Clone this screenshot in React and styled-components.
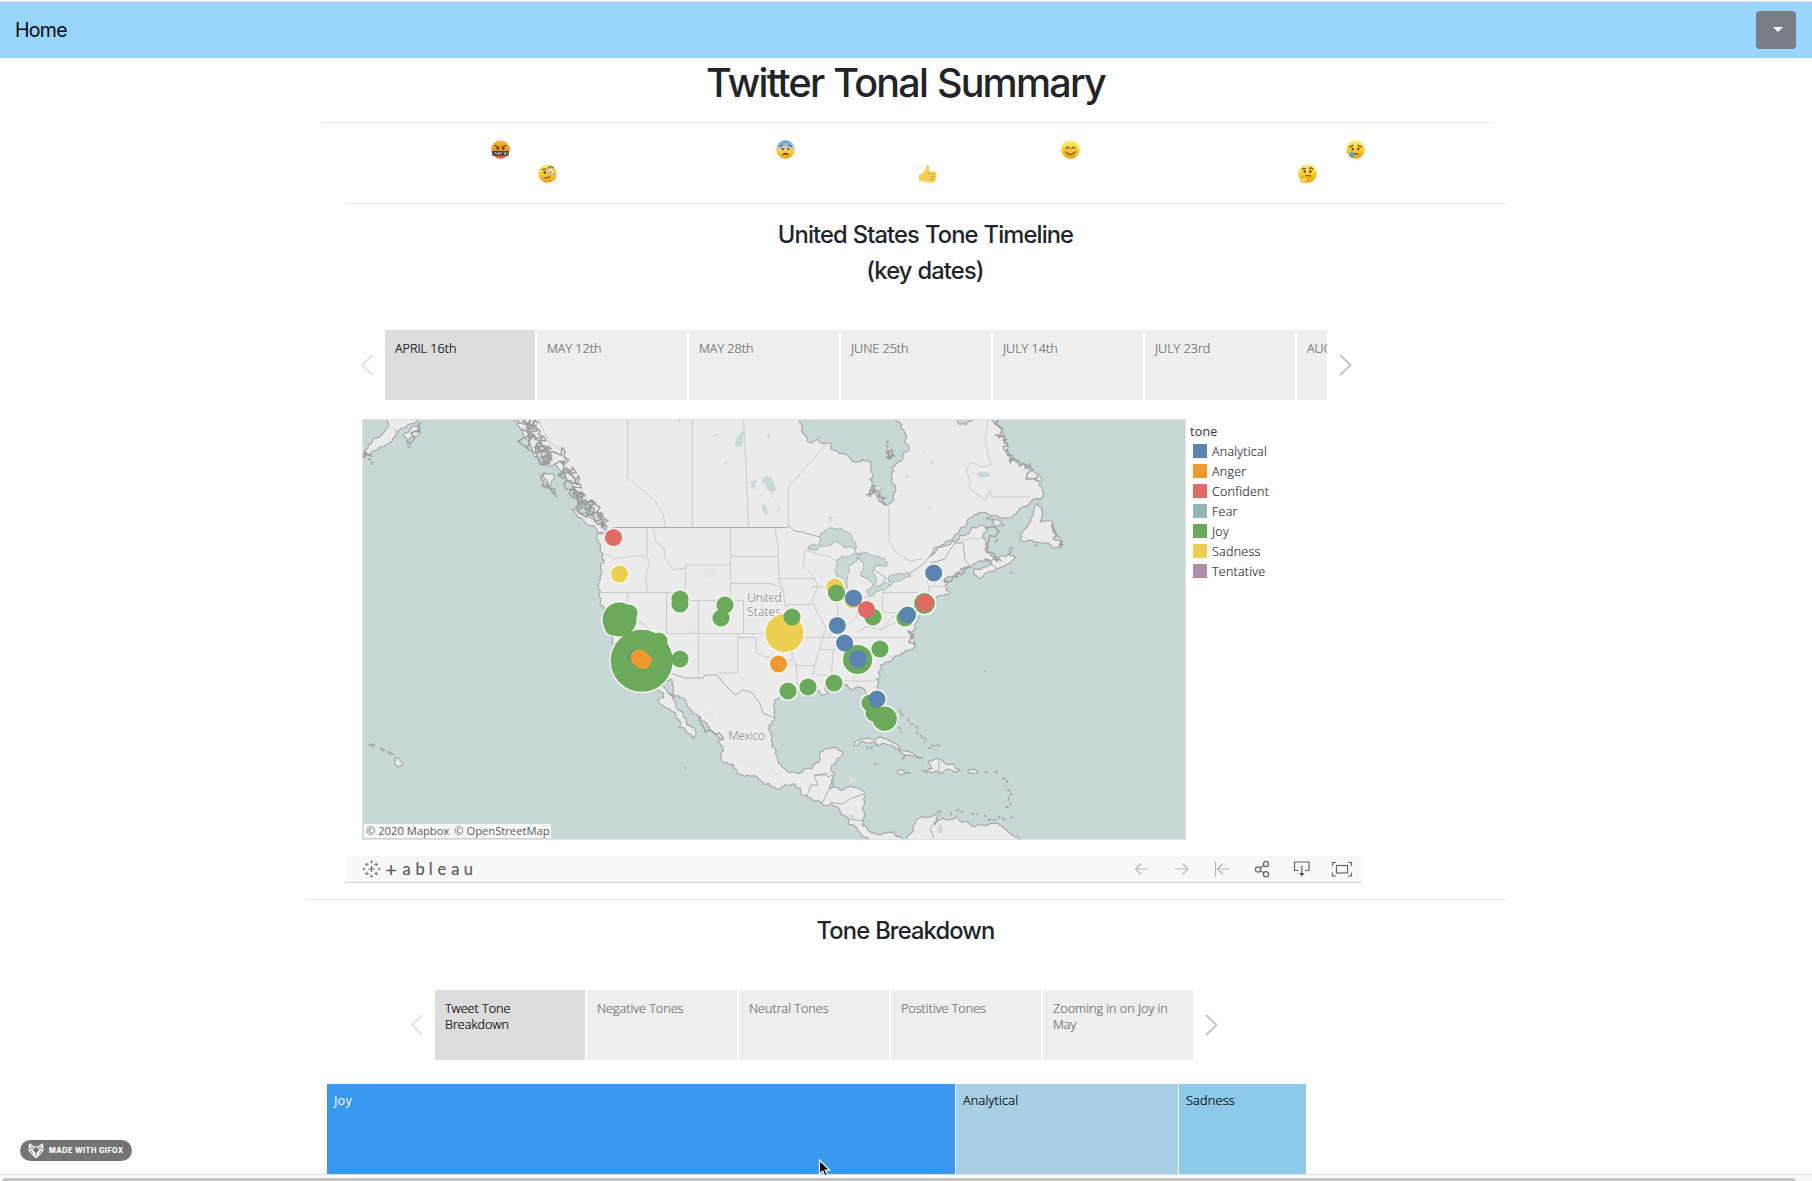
import React from "react";
import styled, { createGlobalStyle } from "styled-components";

const GlobalStyle = createGlobalStyle`
  * { box-sizing: border-box; }
  body { margin: 0; background: #fefefe; overflow: hidden; }
`;

const uiFont = `Inter, "Liberation Sans", sans-serif`;
const vizFont = `"Open Sans", "Noto Sans", sans-serif`;

const Page = styled.div`
  position: relative;
  display: flex;
  flex-direction: column;
  width: 1812px;
  height: 1181px;
  overflow: hidden;
  background: #fefefe;
  color: #212529;
  font-family: ${uiFont};
`;

const TopEdge = styled.div`
  height: 2px;
  flex: none;
  border-bottom: 1px solid #e0e0e0;
`;

const Nav = styled.nav`
  display: flex;
  flex: none;
  align-items: center;
  justify-content: space-between;
  height: 56px;
  padding: 0 16px 0 15px;
  background: #99d4fd;
`;

const Brand = styled.a`
  color: #060a0d;
  font-size: 19.5px;
  line-height: 30px;
  letter-spacing: -0.7px;
`;

const MenuButton = styled.button`
  display: flex;
  align-items: center;
  justify-content: center;
  width: 40px;
  height: 38px;
  padding: 0 0 2px 4px;
  border: 0;
  border-radius: 4px;
  background: #777e85;
`;

const Caret = styled.span`
  border: 5px solid transparent;
  border-top-color: #fff;
  border-bottom: 0;
`;

const Title = styled.h1`
  height: 48px;
  margin: 0;
  padding: 1px 1px 0 0;
  font-size: 39.5px;
  font-weight: 500;
  line-height: 48px;
  letter-spacing: -1.77px;
  word-spacing: 1px;
  text-align: center;
`;

const Rule = styled.hr`
  flex: none;
  width: ${(p) => p.$width}px;
  height: 1px;
  margin: ${(p) => p.$gap} 0 0 ${(p) => p.$left}px;
  border: 0;
  background: #e5e5e5;
`;

const Emotions = styled.div`
  display: flex;
  flex-direction: column;
  width: 1140px;
  height: 48px;
  margin: 15px 0 0 357.6px;
`;

const EmojiRow = styled.div`
  display: grid;
  grid-template-columns: repeat(${(p) => p.$cols}, 1fr);
  justify-items: center;
  align-items: center;
  height: 24px;
  padding-bottom: 1px;
`;

const Heading = styled.h4`
  width: ${(p) => p.$width}px;
  margin: ${(p) => p.$gap}px 0 0 ${(p) => p.$left}px;
  font-size: 23.7px;
  font-weight: 500;
  line-height: 29px;
  letter-spacing: -0.86px;
  word-spacing: 0.5px;
  text-align: center;
`;

const Story = styled.div`
  display: flex;
  align-items: center;
  height: 70px;
  margin: 45px 0 0 ${(p) => p.$left}px;
`;

const StoryPoints = styled.div`
  display: flex;
  gap: 2px;
  width: ${(p) => p.$width}px;
  height: 70px;
  margin: 0 11.5px 0 12px;
  overflow: hidden;
`;

const StoryPoint = styled.div`
  flex: none;
  width: 150px;
  height: 70px;
  padding: 11px 10px;
  background: ${(p) => (p.$active ? "#dddddd" : "#eeeeee")};
  color: ${(p) => (p.$active ? "#000" : "#6c6c6c")};
  font-family: ${vizFont};
  font-weight: 300;
  font-size: 12.6px;
  line-height: 16px;
  white-space: pre-line;
  -webkit-text-stroke: 0.2px currentColor;
`;

const MapRow = styled.div`
  display: flex;
  margin: 19px 0 0 362px;
`;

const MapBox = styled.div`
  position: relative;
  width: 824px;
  height: 421px;
`;

const Attribution = styled.div`
  position: absolute;
  left: 2px;
  bottom: 2px;
  display: flex;
  gap: 5px;
  width: 187px;
  height: 14px;
  padding-left: 2px;
  background: rgba(255, 255, 255, 0.85);
  color: #5c5c5c;
  font-family: ${vizFont};
  font-weight: 500;
  font-size: 11.2px;
  line-height: 14px;
  white-space: nowrap;
`;

const Legend = styled.div`
  display: flex;
  flex-direction: column;
  padding: 3px 0 0 4px;
  font-family: ${vizFont};
  font-size: 12.5px;
`;

const LegendTitle = styled.div`
  height: 19px;
  line-height: 20px;
  color: #333;
  letter-spacing: 0.2px;
`;

const LegendItem = styled.div`
  display: flex;
  align-items: center;
  gap: 5px;
  height: 20px;
  padding-left: 3px;
  color: #222;
  font-weight: 300;
  letter-spacing: 0.25px;
  -webkit-text-stroke: 0.15px currentColor;
`;

const Swatch = styled.span`
  width: 14px;
  height: 14px;
  background: ${(p) => p.$color};
`;

const Toolbar = styled.div`
  display: flex;
  align-items: center;
  justify-content: space-between;
  width: 1016px;
  height: 27px;
  margin: 16px 0 0 346px;
  padding: 0 9px 0 16px;
  border-bottom: 1px solid #d0d0d0;
  background: #f8f8f8;
`;

const Logo = styled.div`
  display: flex;
  align-items: center;
  gap: 1px;
`;

const Wordmark = styled.div`
  display: flex;
  color: #5c5c5c;
  font-family: Lato, sans-serif;
  line-height: 22px;
  -webkit-text-stroke: 0.2px currentColor;
`;

const Letter = styled.span`
  width: ${(p) => p.$w}px;
  font-size: ${(p) => (p.$big ? 20 : 16.5)}px;
  text-align: center;
`;

const Tools = styled.div`
  display: flex;
  gap: 18px;
`;

const Treemap = styled.div`
  display: flex;
  gap: 1px;
  height: 90px;
  margin: 24px 0 0 327px;
`;

const Tile = styled.div`
  width: ${(p) => p.$width}px;
  padding: 8px 7px;
  background: ${(p) => p.$color};
  color: ${(p) => p.$ink};
  font-family: ${vizFont};
  font-weight: ${(p) => p.$weight};
  font-size: 12.7px;
  line-height: 17px;
  letter-spacing: 0.2px;
  -webkit-text-stroke: ${(p) => (p.$weight === 300 ? "0.2px" : "0")} currentColor;
`;

const ScrollTrack = styled.div`
  height: 7px;
  padding: 3px 16px 0 2px;
  border-top: 1px solid #e0e0e0;
  background: #f9f9f9;
`;

const ScrollThumb = styled.div`
  height: 8px;
  border-radius: 4px;
  background: #c4c4c4;
`;

const Badge = styled.div`
  position: absolute;
  left: 20px;
  top: 1140px;
  display: flex;
  align-items: center;
  gap: 5px;
  width: 112px;
  height: 21px;
  padding-left: 8px;
  border-radius: 11px;
  background: #747474;
  color: #fff;
  font-size: 7.2px;
  font-weight: 800;
  letter-spacing: 0.5px;
  white-space: nowrap;
`;

const Cursor = styled.svg`
  position: absolute;
  left: 818px;
  top: 1159px;
`;

/* ---------- emoji ---------- */

const Eyes = ({ y = 8 }) => (
  <g fill="#6b3d0c">
    <ellipse cx="6.3" cy={y} rx="1.1" ry="1.4" />
    <ellipse cx="11.7" cy={y} rx="1.1" ry="1.4" />
  </g>
);

const Face = ({ kind, children }) => (
  <svg width="19" height="19" viewBox="0 0 18 18">
    <defs>
      <linearGradient id={"face-" + kind} x1="0" y1="0" x2="0" y2="1">
        {kind === "fear" ? (
          <>
            <stop offset="0" stopColor="#5c9fd8" />
            <stop offset="0.35" stopColor="#a6cbe0" />
            <stop offset="0.55" stopColor="#f6d040" />
            <stop offset="1" stopColor="#efa514" />
          </>
        ) : kind === "rage" ? (
          <>
            <stop offset="0" stopColor="#f3bd3c" />
            <stop offset="0.5" stopColor="#ee962e" />
            <stop offset="1" stopColor="#f04c24" />
          </>
        ) : (
          <>
            <stop offset="0" stopColor="#fdec7c" />
            <stop offset="0.5" stopColor="#fbd235" />
            <stop offset="1" stopColor="#e99a10" />
          </>
        )}
      </linearGradient>
    </defs>
    <circle cx="9" cy="9" r="8.8" fill={`url(#face-${kind})`} />
    {children}
  </svg>
);

const ink = { fill: "none", stroke: "#6b3d0c", strokeWidth: 1, strokeLinecap: "round" };

const emojis = {
  rage: (
    <Face kind="rage">
      <Eyes y={8} />
      <path d="M3.8 5.2 7.6 7M14.2 5.2 10.4 7" {...ink} />
      <rect x="1.2" y="10.4" width="15.6" height="4.6" rx="0.6" fill="#3a3a3c" />
      <path d="M3 13.8 4.4 11.4 5.6 13.8M7 11.5v2.4M6.4 12.6h2.8M8.6 11.5v2.4M10.4 11.5v1.4M10.4 13.8v.2M12 11.6c2.4-.4 2 1 .8 1.1 1.8.1 1.8 1.3-.6 1.2M15.3 11.6v2.2" stroke="#ddd" strokeWidth="0.7" fill="none" />
    </Face>
  ),
  fear: (
    <Face kind="fear">
      <ellipse cx="6.2" cy="8.3" rx="1.6" ry="1.8" fill="#fff" />
      <ellipse cx="11.8" cy="8.3" rx="1.6" ry="1.8" fill="#fff" />
      <Eyes y={8.5} />
      <path d="M3.4 6.2 5.8 4.8M14.6 6.2 12.2 4.8" {...ink} />
      <path d="M5.8 14.6c.2-3.4 6.2-3.4 6.4 0-1.8-.9-4.6-.9-6.4 0z" fill="#7a3c10" />
    </Face>
  ),
  smile: (
    <Face kind="smile">
      <path d="M4.7 8.2c.5-2 2.5-2 3 0M10.3 8.2c.5-2 2.5-2 3 0M4.8 11.4c1.8 3 6.6 3 8.4 0" {...ink} />
      <circle cx="3.8" cy="10.6" r="1.4" fill="#f39a2d" opacity=".6" />
      <circle cx="14.2" cy="10.6" r="1.4" fill="#f39a2d" opacity=".6" />
    </Face>
  ),
  sad: (
    <Face kind="sad">
      <Eyes y={8.6} />
      <path d="M3.4 6.7 6.6 5M14.6 6.7 11.4 5M7.4 13.8c1-1.3 3-1.3 4 0" {...ink} />
      <path d="M5.4 10.4c2 2.4 2.4 3.2 2.2 4.6-.4 2-4 2-4.4 0-.2-1.4.6-2.6 2.2-4.6z" fill="#4ba3ea" />
    </Face>
  ),
  monocle: (
    <Face kind="monocle">
      <Eyes y={8} />
      <path d="M3.8 5.2 7.6 4.8M6.4 13.2c1.6-.2 3.4-.6 4.8-1.2M9.8 3.2c1.4-.8 3-.8 4.4.1" {...ink} />
      <circle cx="12" cy="7.2" r="3.5" fill="#fff" fillOpacity=".45" stroke="#a9a48d" strokeWidth=".9" />
      <path d="M15.6 8c1 2.6.8 6 1.2 8.5" stroke="#b9b39a" fill="none" strokeWidth=".7" />
    </Face>
  ),
  think: (
    <Face kind="think">
      <Eyes y={7.2} />
      <path d="M4 4.8c1-1 2.4-.8 3.2-.3M10.6 4c1.2-.6 2.6-.2 3.4.8M7.4 11.2c1.6-.4 3-.2 4.6.2" {...ink} />
      <path d="M3.2 12.2c.8-.6 1.4.2 1.6.8l4.6-1.8c1-.2 1.2.8.4 1.2l-2 1.2c1.8.4 1.4 1.6.8 2.4-1 1.6-2.4 2-4 1.8-2-.4-2.4-3-1.4-5.6z" fill="#fbd54a" stroke="#d98a12" strokeWidth=".6" />
    </Face>
  ),
  thumb: (
    <svg width="19" height="20" viewBox="0 0 19 20">
      <path d="M1 10.5c2.6-.4 4.6-2 6-4.6C8 4 7.8 1 9.4 1c2.2 0 2 3.6 1.4 6.4h5.8c1.8 0 2 2 .8 2.6 1.4.5 1.3 2.3.1 2.8 1 .6.8 2.2-.4 2.6.6.8.2 2.6-1.4 2.9-3 .6-6.2.6-8.9-.5-1.9-.7-3.9-.9-5.8-.8z" fill="#f8cf52" />
      <path d="M11.4 10.1h6M11.4 12.9h6M11.6 15.5h5.400M10.800 7.400c-.2 1-.8 1.800-1.200 2.400" stroke="#dc9a26" strokeWidth=".9" fill="none" />
    </svg>
  ),
};

/* ---------- map ---------- */

function makeRandom(seed) {
  let s = seed * 7919;
  return () => {
    s = (s * 16807) % 2147483647;
    return s / 2147483647 - 0.5;
  };
}

// Splits every long segment and nudges the midpoints, so that a coast reads as ragged.
function coast(text, amp = 0.35, close = true, seed = 7) {
  const rnd = makeRandom(seed);
  let pts = text.trim().split(/\s+/).map((p) => p.split(",").map(Number));
  if (close) pts.push(pts[0]);
  for (let k = 0; k < 3; k++) {
    const out = [pts[0]];
    for (let i = 1; i < pts.length; i++) {
      const [ax, ay] = pts[i - 1];
      const [bx, by] = pts[i];
      const len = Math.hypot(bx - ax, by - ay);
      if (len > 2) {
        const off = rnd() * Math.min(len, 14) * amp;
        out.push([(ax + bx) / 2 - ((by - ay) / len) * off, (ay + by) / 2 + ((bx - ax) / len) * off]);
      }
      out.push(pts[i]);
    }
    pts = out;
  }
  return "M" + pts.map((p) => p[0].toFixed(1) + " " + p[1].toFixed(1)).join("L") + (close ? "Z" : "");
}

const mainland = `513,400 514,420 520,428 525,438 532,448 540,460 548,466 555,463 560,470 566,477 572,482 575,490
580,500 590,510 600,516 606,525 609,531 598,534 601,545 603,555 601,570 599,583 601,592 600,600 604,608 606,625 610,635
618,645 640,685 656,690 664,698 659,699 660,704 666,708 672,712 678,720 679,727 687,733 693,739 696,736 690,725 685,718
680,711 675,702 668,692 662,686 670,679 673,690 680,698 688,707 697,715 698,720 708,727 720,738 723,747 721,754 727,763
737,771 747,775 762,782 773,787 780,789 792,784 800,788 810,798 822,803 835,806 840,812 848,818 849,825 858,831 867,838
870,843 905,843 899,836 890,832 880,835 875,833 867,828 862,820 863,807 865,792 860,789 847,787 833,787 830,789 833,777
835,763 837,760 842,751 838,749 820,752 817,763 812,769 793,772 783,768 777,757 772,747 771,735 772,723 775,717 774,707
780,697 797,690 810,692 818,690 822,695 828,693 825,687 830,685 845,685 853,690 862,688 866,693 867,705 880,723 890,727
892,715 883,702 877,688 876,679 880,670 893,658 900,655 908,650 915,645 913,638 908,632 915,627 918,617 925,612 930,603
937,597 950,593 945,585 947,577 959,572 971,567 976,563 988,559 1002,558 991,556 986,548 982,538 984,533 988,530 985,526
972,527 960,535 948,545 930,556 954,537 967,523 974,515 995,515 1016,514 1028,505 1040,500 1042,490 1041,480 1033,470
1016,462 1009,453 1004,443 1003,433 998,425 991,419 988,400 976,400 974,420 966,425 957,420 955,400 893,400 895,419
905,432 909,447 902,460 892,467 892,483 893,497 891,503 886,505 878,497 872,485 871,463 854,462 840,454 827,443
817,439 807,441 802,427 796,418 792,400`;

const islands = [
  "358,458 366,450 372,443 379,437 385,431 388,415 420,415 410,424 402,428 393,438 380,447 370,454",
  "403,435 412,427 421,423 420,433 408,442",
  "572,509 587,515 600,525 607,534 598,532 585,522",
  "543,473 552,473 551,485 557,497 548,488",
  "974,568 978,578 988,572 1002,567 1016,557 1009,555 1012,547 1005,557 991,563",
  "1038,503 1042,508 1040,522 1053,523 1055,532 1062,540 1060,548 1052,548 1047,543 1040,543 1029,540 1020,541 1026,528 1031,518",
  "986,518 995,520 1004,526 996,526",
  "854,746 860,739 880,737 897,744 913,753 923,758 902,759 905,755 890,745 870,743",
  "928,761 943,761 960,769 957,772 943,772 941,774 936,771 922,771 932,769",
  "897,771 903,770 910,773 904,774",
  "968,770 977,770 978,773 969,773",
  "396,757 403,763 398,767 395,762",
  "388,752 394,754 390,755",
  "381,748 385,750 382,751",
  "371,744 375,745 372,747",
  "903,843 907,837 913,827 916,820 930,817 942,811 937,817 935,825 939,820 948,820 957,817 962,822 980,825 993,823 1003,827 1010,833 1022,843",
];

const lakes = [
  "808,549 820,538 833,528 841,528 848,533 855,544 855,550 845,548 838,543 828,546 817,550",
  "836,560 842,556 852,555 862,553 857,560 849,566 846,575 847,588 842,594 836,590 837,575",
  "858,555 874,556 885,558 886,567 878,566 874,566 876,577 873,585 869,580 861,576 864,567",
  "867,590 880,586 892,584 885,590 869,596",
  "888,579 899,574 909,573 910,577 899,581 889,582",
  "763,477 770,477 776,490 773,500 766,490",
  "751,482 757,480 756,490 751,488",
  "761,501 768,510 767,515 762,508",
  "777,503 780,508 777,513",
  "828,517 834,517 831,523",
  "742,432 746,430 741,446 737,447",
  "712,437 717,433 715,437",
  "678,420 681,419 680,425",
  "975,475 980,471 985,472 991,475 984,477",
  "903,478 908,474 907,479",
  "927,507 931,504 929,509",
  "937,829 941,823 943,830 939,833",
  "848,813 852,815 855,819 850,818",
  "930,462 935,463 931,465",
  "921,450 925,452 924,454",
  "767,436 769,434 769,439",
  "724,463 729,462 725,465",
  "389,428 396,430 394,431",
];

const nationBorders = [
  "M612 527.5H788",
  "M788 525l6 6 8 1 10 3 8 2 12-8",
  "M840 540l14 8 4 10 28 20-8 12M888 580l22-6",
  "M910 573l12-8 8-9",
  "M670 673l15 5h18l2-3h12l5 6 5 6 9 8 6-5 9 2 9 11 3 10 12 5",
  "M930 563l8-2 7-2 4-8 6-8 8 0 2 17 6 7",
  "M814 775h13v-1M827 777l6-2v12M808 793l3-8 7 0-4-9 12-3",
  "M822 803l8-15M830 802l12 2 10-6 12-4M849 819l15 2M937 820l-7 8 4 10",
  "M939 761v11",
];

const stateBorders = [
  "M605 554l10 5 17-3h15M647 528v28M647 557l3 4-4 14 1 17M600 592.5h85",
  "M653 528l3 14 8 6 1 10 8 12 12-2M685.5 592v-27h46M730.5 528v72M731 556.5h48M731 583.5h39l9 3 4 5",
  "M685 592v8.5h59M666.5 592v62M698.5 600v78M743.5 600v34M667 633.5h125M737.5 634v39h-20M737 637.5h19v15l9 4 12 2 15 2",
  "M627.5 592v18l38 34",
  "M775 528l3 17 1 35 4 10 2 15 5 8v24M779 578.5h35M805 550l-2 15 10 10 5 11-6 14 4 10 10 18-4 12-6 20-3 15",
  "M787 604.5h25M792 637.5h32M796 665.5h18M792 637v18l4 10 2 25M805 550l25 7 8 5M812 587h24",
  "M820 649.5h60M824 637.5h89M833 649.5l-2 34M848 650l6 22v9M843 681h32M816 675h14",
  "M837.5 595v25l-8 16M857 597v20l-14 12M857 597h12M882.5 592v20M882.5 612.5h30M882 592.5h36l6 8",
  "M857 632l12-6 12 4 16-18M880 649l14 10M880 630l24-12",
  "M929 586.5h17M928 580.5h18M939 563l-4 22M925 573l5 20",
  "M627.5 419v59l12 10 15 12 9 15 2 13M692.5 419v109M743.5 419l2 36 3 73M788.5 527v-40l39-44",
  "M889 505v35l6 12 15 9 12-2",
  "M988 419l-3 22 6 24-10 2-9-5-6 8 4 10-1 8 8 6 8 6 5-10 2 7h38M958 543l12-5 10 1",
  "M538 419l6 12 6 12 10 6 5 10",
];

const fjords = [
  "518,420 524,424 530,432 534,440 540,446 546,454 550,462",
  "524,422 528,432 536,438 541,450 546,458 544,466",
  "530,420 536,432 540,442 548,448 554,452 556,464",
  "522,428 532,436 530,444 540,450 538,458 548,464",
  "560,462 564,470 562,478 570,482 574,492 579,498 582,506",
  "566,470 574,478 580,484 576,494 586,500 584,508 594,512",
  "588,508 594,508 598,514 604,518 606,526",
  "574,486 578,492 577,498 583,504 590,511 598,518 606,525",
];

const raggedShores = [
  "994,419 999,427 1004,437 1004,449 1010,455 1018,463 1033,470 1040,482",
  "886,452 892,450 894,456 889,460 887,452",
  "908,630 913,634 910,640 915,645",
  "1053,524 1056,533 1061,541 1059,547",
  "945,578 958,573 970,568",
  "700,716 712,731 720,740",
  "866,495 872,486 878,497 886,505",
  "545,474 547,484 555,494",
  "408,441 413,436 420,432 418,426",
  "372,457 368,455 362,456",
  "985,528 988,548 994,558 1002,560",
];

const specks = [
  "899,710 903,714 902,717", "896,722 900,728 901,733", "908,718 912,724 917,730", "917,731 920,735 925,738 924,743",
  "928,748 932,745 940,747", "866,746 871,748 878,747", "994,772 998,774", "1003,777 1006,787", "1007,790 1009,800 1006,810",
  "985,773 988,772", "950,812 951,816", "956,811 963,813", "971,814 978,814", "984,815 986,817", "988,821 996,820 1006,822",
  "364,455 372,461 373,466", "411,447 405,447", "368,745 371,744", "874,763 880,764", "1010,818 1012,816", "685,767 687,768",
  "1034,545 1038,544", "1010,573 1012,574", "984,559 990,563 996,566", "996,543 998,540", "889,452 887,446 890,440",
  "670,693 674,698", "984,671 986,671",
];

const tones = {
  Analytical: "#5c84b1", Anger: "#ee9a2e", Confident: "#e26a64", Fear: "#92b5b8", Joy: "#6aaa5a", Sadness: "#ecce50", Tentative: "#b18ea9",
};

const marks = [
  [613.5, 537.5, 8.6, "Confident"], [619.5, 574, 8.6, "Sadness"],
  [680, 599, 8.6, "Joy"], [680, 604, 8.6, "Joy"], [725, 605, 8.6, "Joy"], [721, 618, 8.6, "Joy"],
  [619.5, 619.5, 17, "Joy"], [629, 613, 8.6, "Joy"], [613, 627, 8.6, "Joy"],
  [641.7, 660.8, 31, "Joy"], [659, 641, 8.6, "Joy"], [680, 659, 8.6, "Joy"],
  [637.8, 657, 8.6, "Analytical"], [639, 657.5, 8.6, "Anger"], [643, 660.5, 8.6, "Anger"],
  [784.5, 633, 19, "Sadness"], [792, 617, 8.6, "Joy"], [778.5, 664, 8.6, "Anger"],
  [788, 691, 8.6, "Joy"], [808, 687, 8.6, "Joy"], [834, 683, 8.6, "Joy"],
  [835, 587, 8.6, "Sadness"], [836.5, 593, 8.6, "Joy"], [853, 600, 8.6, "Sadness"], [853.5, 598, 8.6, "Analytical"],
  [873, 617, 8.6, "Joy"], [866.5, 609.5, 8.6, "Confident"],
  [905, 618, 8.6, "Joy"], [907.6, 615, 8.6, "Analytical"],
  [924.5, 603.5, 10.4, "Joy"], [924.8, 603, 8.8, "Confident"], [933.7, 573, 8.6, "Analytical"],
  [837.3, 625.5, 8.6, "Analytical"], [857.6, 659.5, 14.6, "Joy"], [844.6, 643, 8.6, "Analytical"], [858, 659, 9, "Analytical"],
  [880, 649, 8.6, "Joy"], [870, 703, 8.6, "Joy"], [874, 713, 8.6, "Joy"], [884.7, 718.7, 12.2, "Joy"], [877, 699, 8.6, "Analytical"],
];

const NorthAmerica = () => (
  <svg width="824" height="421" viewBox="362 419 824 421" fontFamily='"Open Sans", sans-serif' display="block">
    <rect x="362" y="419" width="824" height="421" fill="#c8d8d7" />
    <g fill="#ebebeb" stroke="#a3a5a4" strokeWidth="1.1" strokeLinejoin="round">
      <path d={coast(mainland, 0.55)} />
      {islands.map((d, i) => <path key={d} d={coast(d, 0.45, true, i + 11)} />)}
    </g>
    <g fill="#e2e2e2" opacity=".55">
      <path d="M706 568l8-3 3 8-6 6-8-2zM690 620l6 2-2 14-6-4zM703 710l8 2 6 14-8-6zM740 758l8 4 12 3-4 4-14-4zM770 764l6 8 2 8-6-6zM848 775l8 4-6 6z" />
    </g>
    <g fill="none" stroke="#c9cbcb" strokeWidth="1">
      {stateBorders.map((d) => <path key={d} d={d} />)}
    </g>
    <g fill="none" stroke="#a9abab" strokeWidth="1">
      {nationBorders.map((d) => <path key={d} d={d} />)}
    </g>
    <g fill="#c8d8d7" stroke="#a3acab" strokeWidth=".9">
      {lakes.map((d, i) => <path key={d} d={coast(d, 0.5, true, i + 31)} stroke={i > 4 ? "none" : undefined} />)}
      <path d={coast("891,424 897,436 895,452 886,455 884,440", 0.2)} stroke="none" />
    </g>
    <path d={coast("873,486 879,486 882,489 877,490", 0.2)} fill="#ebebeb" stroke="#aaa" strokeWidth=".7" />
    <g fill="none" stroke="#9c9e9d" strokeWidth="1.4">
      {fjords.map((d, i) => <path key={d} d={coast(d, 2, false, i + 51)} />)}
      {raggedShores.map((d, i) => <path key={d} d={coast(d, 1.3, false, i + 71)} />)}
    </g>
    <g fill="none" stroke="#9c9e9d" strokeWidth="1.2" strokeDasharray="4 2">
      {specks.map((d, i) => <path key={d} d={coast(d, 0.8, false, i + 91)} />)}
    </g>
    <g fill="#999d9d" fontSize="12.5" stroke="#f3f3f3" strokeWidth="2.5" paintOrder="stroke">
      <text x="747" y="602" textLength="35">United</text>
      <text x="747" y="616" textLength="34">States</text>
      <text x="728" y="740" textLength="37">Mexico</text>
    </g>
    <g fill="#f6f6f2">
      {marks.map(([x, y, r], i) => <circle key={i} cx={x} cy={y} r={r + 1.5} />)}
    </g>
    {marks.map(([x, y, r, tone], i) => <circle key={i} cx={x} cy={y} r={r} fill={tones[tone]} />)}
    <rect x="362.5" y="419.5" width="823" height="420" fill="none" stroke="#dfe2e2" />
  </svg>
);

/* ---------- toolbar drawings ---------- */

const TableauMark = () => {
  const plus = (x, y, r) => `M${x - r} ${y}h${2 * r}M${x} ${y - r}v${2 * r}`;
  return (
    <svg width="19" height="18" viewBox="0 0 19 18" fill="none" stroke="#6c6c6c" strokeWidth=".9">
      <path d={plus(9.5, 9, 3)} strokeWidth="1.2" />
      <path d={[plus(4.8, 4.4, 1.9), plus(14.2, 4.4, 1.9), plus(4.8, 13.6, 1.9), plus(14.2, 13.6, 1.9)].join("")} />
      <path d={[plus(9.5, 1.8, 1.5), plus(9.5, 16.2, 1.5), plus(1.9, 9, 1.5), plus(17.1, 9, 1.5)].join("")} strokeWidth=".8" />
    </svg>
  );
};

const toolPaths = [
  ["#b5b5b5", <path key="a" d="M4.5 11h13M10 5.5 4.5 11l5.5 5.5" />],
  ["#b5b5b5", <path key="a" d="M4 11h13M11.5 5.5 17 11l-5.5 5.5" />],
  ["#b5b5b5", <path key="a" d="M4.5 3.5v15M6.5 11h12M12 5.5 6.5 11l5.5 5.5" />],
  ["#666", <g key="a"><circle cx="7" cy="11.5" r="2.6" /><circle cx="15" cy="6" r="2.6" /><circle cx="15" cy="16.3" r="2.6" /><path d="M9.2 10 12.8 7.5M9.400 12.700l3.400 2.100" /></g>],
  ["#666", <g key="a"><path d="M7.500 12.500h-4v-8.500h14.500v8.500h-4M10.800 7.500v9" /><path d="M8 15h5.600l-2.800 3.600z" fill="#555" stroke="none" /></g>],
  ["#666", <g key="a"><rect x="5.500" y="7.500" width="11" height="7.500" /><path d="M1.500 8V4.500H5M17 4.500h3.500V8M20.500 14.500V18H17M5 18H1.500v-3.500" /></g>],
];

const Chevron = ({ dir, faint }) => (
  <svg width="13" height="22" viewBox="0 0 13 22" fill="none" stroke={faint ? "#e0e0e0" : "#c3c3c3"} strokeWidth="1.8" strokeLinecap="round">
    <path d={dir === "left" ? "M12 1.5 2 11l10 9.5" : "M1.5 1.5l10 9.5-10 9.5"} />
  </svg>
);

const StoryNav = ({ left, width, points }) => (
  <Story $left={left}>
    <Chevron dir="left" faint />
    <StoryPoints $width={width}>
      {points.map((p, i) => <StoryPoint key={p} $active={i === 0}>{p}</StoryPoint>)}
    </StoryPoints>
    <Chevron dir="right" />
  </Story>
);

const wordmark = [["+", 18], ["a", 13], ["b", 14], ["l", 7.5], ["e", 14.5], ["a", 12.5], ["u", 13.5]];

export default function App() {
  return (
    <Page>
      <GlobalStyle />
      <TopEdge />
      <Nav>
        <Brand>Home</Brand>
        <MenuButton aria-label="Menu"><Caret /></MenuButton>
      </Nav>
      <Title>Twitter Tonal Summary</Title>
      <Rule $left={321} $width={1169} $gap="16px" />
      <Emotions>
        <EmojiRow $cols={4}>{emojis.rage}{emojis.fear}{emojis.smile}{emojis.sad}</EmojiRow>
        <EmojiRow $cols={3}>{emojis.monocle}{emojis.thumb}{emojis.think}</EmojiRow>
      </Emotions>
      <Rule $left={346} $width={1159} $gap="17px" />
      <Heading $left={346} $width={1159} $gap={16}>United States Tone Timeline</Heading>
      <Heading $left={346} $width={1158} $gap={7}>(key dates)</Heading>
      <StoryNav
        left={360}
        width={942}
        points={["APRIL 16th", "MAY 12th", "MAY 28th", "JUNE 25th", "JULY 14th", "JULY 23rd", "AUG"]}
      />
      <MapRow>
        <MapBox>
          <NorthAmerica />
          <Attribution><span>© 2020 Mapbox</span><span>© OpenStreetMap</span></Attribution>
        </MapBox>
        <Legend>
          <LegendTitle>tone</LegendTitle>
          {Object.entries(tones).map(([name, color]) => (
            <LegendItem key={name}><Swatch $color={color} />{name}</LegendItem>
          ))}
        </Legend>
      </MapRow>
      <Toolbar>
        <Logo>
          <TableauMark />
          <Wordmark>{wordmark.map(([c, w], i) => <Letter key={i} $w={w} $big={i === 0}>{c}</Letter>)}</Wordmark>
        </Logo>
        <Tools>
          {toolPaths.map(([color, art], i) => (
            <svg key={i} width="22" height="22" viewBox="0 0 22 22" fill="none" stroke={color} strokeWidth="1.2">{art}</svg>
          ))}
        </Tools>
      </Toolbar>
      <Rule $left={306} $width={1199} $gap="16px" />
      <Heading $left={306} $width={1199} $gap={16}>Tone Breakdown</Heading>
      <StoryNav
        left={410}
        width={758}
        points={["Tweet Tone\nBreakdown", "Negative Tones", "Neutral Tones", "Postitive Tones", "Zooming in on Joy in May"]}
      />
      <Treemap>
        <Tile $width={628} $color="#3999f1" $ink="#fff" $weight={400}>Joy</Tile>
        <Tile $width={222} $color="#a9cfe4" $ink="#000" $weight={300}>Analytical</Tile>
        <Tile $width={127} $color="#8dc9e8" $ink="#000" $weight={300}>Sadness</Tile>
      </Treemap>
      <ScrollTrack><ScrollThumb /></ScrollTrack>
      <Badge>
        <svg width="16" height="15" viewBox="0 0 16 15" fill="none" stroke="#fff" strokeWidth="1.1" strokeLinejoin="round">
          <path d="M1.5 1 6 4h4l4.5-3 .5 6.5-3 3.5-4 3.5L4 11 1 7.5zM1.5 1 4 7.5 8 14.5 12 7.5 14.5 1M1 7.5h3L6 4M15 7.5h-3L10 4M4 7.5l3 2.5M12 7.5 9 10M6.5 11h3" />
        </svg>
        MADE WITH GIFOX
      </Badge>
      <Cursor width="13" height="19" viewBox="0 0 13 19">
        <path d="M1.5 1v14l3.2-2.9 2.3 5 2.4-1.1-2.2-4.8h4.4z" fill="#000" stroke="#fff" strokeWidth="1.2" />
      </Cursor>
    </Page>
  );
}
